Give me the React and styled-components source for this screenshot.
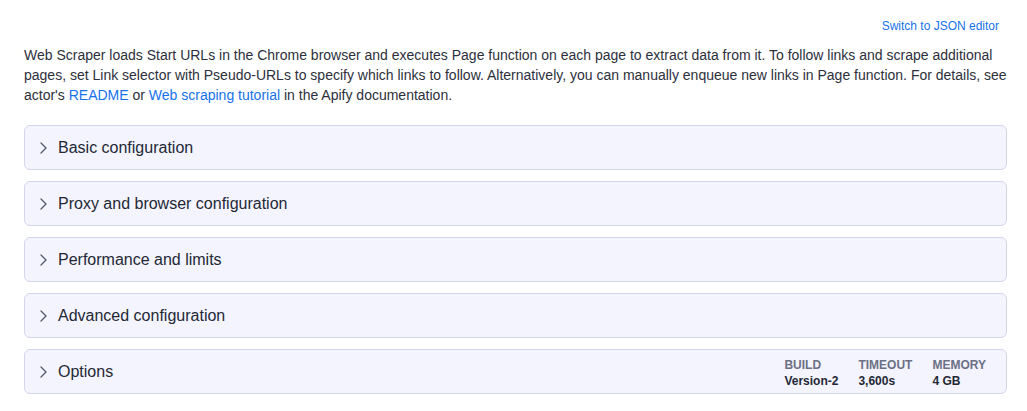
import React from 'react'
import styled, { createGlobalStyle } from 'styled-components'

const GlobalStyle = createGlobalStyle`
	body {
		margin: 0;
		background: #ffffff;
		font-family: 'Liberation Sans', Arial, sans-serif;
		color: #242836;
	}
`

const Page = styled.div`
	width: 1027px;
	padding: 16px 20px 0 24px;
	box-sizing: border-box;
`

const TopBar = styled.div`
	display: flex;
	justify-content: flex-end;
	padding-right: 8px;
	height: 20px;
	align-items: center;
`

const Link = styled.a`
	color: #1672eb;
	text-decoration: none;
	cursor: pointer;
	font-size: ${(props) => (props.small ? '12px' : 'inherit')};
`

const Description = styled.p`
	margin: 9px -12px 20px 0;
	font-size: 14px;
	line-height: 20px;
	color: #2d303c;
`

const Sections = styled.div`
	display: flex;
	flex-direction: column;
	gap: 11px;
`

const Section = styled.div`
	height: 45px;
	box-sizing: border-box;
	border: 1px solid #d3d5ea;
	border-radius: 6px;
	background: #f3f4fd;
	display: flex;
	align-items: center;
	padding: 0 20px 0 13px;
`

const Chevron = styled.svg`
	width: 12px;
	height: 14px;
	margin-right: 8px;
	flex-shrink: 0;
`

const Title = styled.span`
	font-size: 16px;
	color: #242836;
	flex: 1;
`

const Meta = styled.div`
	display: flex;
	gap: 20px;
	padding-top: 2px;
`

const MetaItem = styled.div`
	display: flex;
	flex-direction: column;
	font-size: 12px;
	font-weight: bold;
	line-height: 16px;
`

const MetaLabel = styled.span`
	color: #6c7085;
	text-transform: uppercase;
`

const MetaValue = styled.span`
	color: #242836;
`

const sections = [
	'Basic configuration',
	'Proxy and browser configuration',
	'Performance and limits',
	'Advanced configuration',
]

const meta = [
	{ label: 'Build', value: 'Version-2' },
	{ label: 'Timeout', value: '3,600s' },
	{ label: 'Memory', value: '4 GB' },
]

const Arrow = () => (
	<Chevron viewBox="0 0 12 14" fill="none">
		<path d="M3 2 L8 7 L3 12" stroke="#555a6b" strokeWidth="1.3" strokeLinecap="round" strokeLinejoin="round" />
	</Chevron>
)

const App = () => (
	<Page>
		<GlobalStyle />
		<TopBar>
			<Link small>Switch to JSON editor</Link>
		</TopBar>
		<Description>
			Web Scraper loads Start URLs in the Chrome browser and executes Page function on each page to extract data from it. To follow links and scrape additional pages, set Link selector with Pseudo-URLs to specify which links to follow. Alternatively, you can manually enqueue new links in Page function. For details, see actor's <Link>README</Link> or <Link>Web scraping tutorial</Link> in the Apify documentation.
		</Description>
		<Sections>
			{sections.map((name) => (
				<Section key={name}>
					<Arrow />
					<Title>{name}</Title>
				</Section>
			))}
			<Section>
				<Arrow />
				<Title>Options</Title>
				<Meta>
					{meta.map(({ label, value }) => (
						<MetaItem key={label}>
							<MetaLabel>{label}</MetaLabel>
							<MetaValue>{value}</MetaValue>
						</MetaItem>
					))}
				</Meta>
			</Section>
		</Sections>
	</Page>
)

export default App
